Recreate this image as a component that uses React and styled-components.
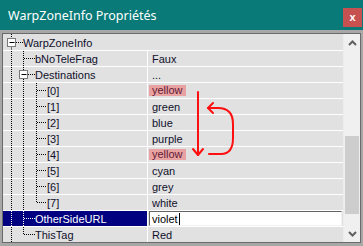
import React from "react";
import styled, {createGlobalStyle} from "styled-components";

const GlobalStyle = createGlobalStyle`
  html, body {
    margin: 0;
    padding: 0;
    background: #ffffff;
  }
`;

const Window = styled.div`
  position: relative;
  width: 363px;
  height: 246px;
  display: flex;
  flex-direction: column;
  overflow: hidden;
  font-family: "Liberation Sans", Arial, sans-serif;
`;

const TitleBar = styled.div`
  height: 30px;
  flex: none;
  display: flex;
  align-items: center;
  justify-content: space-between;
  padding-left: 8px;
  padding-right: 1px;
  background: #097a78;
  color: #ffffff;
  font-family: "Noto Sans", sans-serif;
  font-size: 12.5px;
`;

const CloseButton = styled.div`
  width: 19px;
  height: 19px;
  margin-top: 5px;
  display: flex;
  align-items: center;
  justify-content: center;
  background: #c75050;
  color: #ffffff;
  font-family: "Liberation Sans", sans-serif;
  font-weight: bold;
  font-size: 11px;
  padding-bottom: 2px;
  box-sizing: border-box;
`;

const Frame = styled.div`
  flex: 1;
  display: flex;
  border-top: 3px solid #a7a7a7;
  border-left: 2px solid #a7a7a7;
  border-right: 2px solid #a7a7a7;
  border-bottom: 3px solid #a7a7a7;
`;

const Panel = styled.div`
  flex: 1;
  display: flex;
  border: 1px solid #6a6a6a;
  background: #e1e1e1;
`;

const Rows = styled.div`
  flex: 1;
  display: flex;
  flex-direction: column;
`;

const Row = styled.div`
  height: ${p => (p.$first ? 16 : 15)}px;
  border-top: ${p => (p.$first ? "none" : "1px solid #ffffff")};
  display: grid;
  grid-template-columns: ${p => (p.$category ? "1fr" : "145px 1fr")};
  font-size: 11px;
  color: #10102c;
`;

const NameCell = styled.div`
  display: flex;
  align-items: center;
  background: ${p => (p.$selected ? "#000080" : "transparent")};
  color: ${p => (p.$selected ? "#ffffff" : "inherit")};
  border-right: ${p => (p.$category ? "none" : "1px solid #ffffff")};
  white-space: nowrap;
  overflow: hidden;
`;

const Label = styled.span`
  padding-top: 1px;
`;

const ValueCell = styled.div`
  display: flex;
  align-items: center;
  padding-left: 4px;
  padding-right: 1px;
`;

const Marked = styled.span`
  background: #e9a2a2;
  color: #5e1b35;
  padding: 0 3px;
  margin-left: -3px;
  line-height: 11px;
`;

const EditBox = styled.div`
  flex: 1;
  height: 15px;
  margin-left: -3px;
  box-sizing: border-box;
  display: flex;
  align-items: center;
  padding-left: 2px;
  background: #ffffff;
  border-top: 1px solid #646464;
  border-left: 1px solid #646464;
  border-right: 1px solid #f0f0f0;
  border-bottom: 1px solid #f0f0f0;
  color: #000000;
`;

const Caret = styled.span`
  display: inline-block;
  width: 1px;
  height: 12px;
  margin-left: 1px;
  background: #000000;
`;

const ScrollBar = styled.div`
  width: 16px;
  flex: none;
  display: flex;
  flex-direction: column;
  background: #f0f0f0;
  border-left: 1px solid #ececec;
`;

const ScrollButton = styled.div`
  height: 17px;
  flex: none;
  display: flex;
  align-items: center;
  justify-content: center;
`;

const Track = styled.div`
  flex: 1;
  display: flex;
  flex-direction: column;
`;

const Thumb = styled.div`
  margin-top: ${p => p.$offset}px;
  height: ${p => p.$size}px;
  margin-left: 1px;
  margin-right: 1px;
  background: #cdcdcd;
`;

const Annotation = styled.svg`
  position: absolute;
  left: 0;
  top: 0;
  pointer-events: none;
`;

// tree gutter: x positions of the guide lines inside the name cell
const L0 = 8.5;
const L1 = 20.5;
const L2 = 33.5;

const TreeLines = ({width, height, parts, light}) => {
    const col = light ? "#ffffff" : "#000000";
    const mid = Math.floor(height / 2) + 0.5;
    return (
        <svg width={width} height={height} style={{flex: "none", display: "block"}}>
            {parts.map((p, i) => {
                if (p.type === "v") {
                    const y1 = p.from === "mid" ? mid : 0;
                    const y2 = p.to === "mid" ? mid : height;
                    return <line key={i} x1={p.x} x2={p.x} y1={y1} y2={y2}
                                 stroke={col} strokeDasharray="1 1"/>;
                }
                if (p.type === "h") {
                    return <line key={i} x1={p.x1} x2={p.x2} y1={mid} y2={mid}
                                 stroke={col} strokeDasharray="1 1"/>;
                }
                // minus box
                return (
                    <g key={i}>
                        <rect x={p.x - 4} y={mid - 4} width="8" height="8"
                              fill="#ffffff" stroke="#7a7a7a"/>
                        <line x1={p.x - 2} x2={p.x + 3} y1={mid} y2={mid} stroke="#000000"/>
                    </g>
                );
            })}
        </svg>
    );
};

const items = [
    {
        name: "WarpZoneInfo", category: true, gutter: 20,
        parts: [
            {type: "v", x: L0, to: "mid"},
            {type: "v", x: L0, from: "mid"},
            {type: "h", x1: 13, x2: 20},
            {type: "box", x: L0},
        ],
    },
    {
        name: "bNoTeleFrag", value: "Faux", gutter: 32,
        parts: [
            {type: "v", x: L0},
            {type: "v", x: L1},
            {type: "h", x1: 21, x2: 32},
        ],
    },
    {
        name: "Destinations", value: "...", gutter: 32,
        parts: [
            {type: "v", x: L0},
            {type: "v", x: L1},
            {type: "h", x1: 25, x2: 32},
            {type: "box", x: L1},
        ],
    },
];

const colours = ["yellow", "green", "blue", "purple", "yellow", "cyan", "grey", "white"];
colours.forEach((c, i) => {
    items.push({
        name: `[${i}]`,
        value: c,
        marked: i === 0 || i === 4,
        gutter: 44,
        parts: [
            {type: "v", x: L0},
            {type: "v", x: L1},
            {type: "v", x: L2, to: i === 7 ? "mid" : undefined},
            {type: "h", x1: 34, x2: 44},
        ],
    });
});

items.push({
    name: "OtherSideURL", value: "violet", editing: true, selected: true, gutter: 32,
    parts: [
        {type: "v", x: L0},
        {type: "v", x: L1},
        {type: "h", x1: 21, x2: 32},
    ],
});

items.push({
    name: "ThisTag", value: "Red", gutter: 32,
    parts: [
        {type: "v", x: L0},
        {type: "v", x: L1, to: "mid"},
        {type: "h", x1: 21, x2: 32},
    ],
});

const Chevron = ({down}) => (
    <svg width="9" height="6">
        <polyline points={down ? "1,1 4.5,4.5 8,1" : "1,5 4.5,1.5 8,5"}
                  fill="none" stroke="#606060" strokeWidth="2"/>
    </svg>
);

export default function App() {
    return (
        <Window>
            <GlobalStyle/>
            <TitleBar>
                <span>WarpZoneInfo Propriétés</span>
                <CloseButton>x</CloseButton>
            </TitleBar>
            <Frame>
                <Panel>
                    <Rows>
                        {items.map((item, index) => {
                            const h = index === 0 ? 16 : 15;
                            return (
                                <Row key={index} $first={index === 0} $category={item.category}>
                                    <NameCell $selected={item.selected} $category={item.category}>
                                        <TreeLines width={item.gutter} height={h}
                                                   parts={item.parts} light={item.selected}/>
                                        <Label>{item.name}</Label>
                                    </NameCell>
                                    {!item.category &&
                                        <ValueCell>
                                            {item.editing ?
                                                <EditBox>{item.value}<Caret/></EditBox> :
                                                item.marked ?
                                                    <Marked>{item.value}</Marked> :
                                                    <Label>{item.value}</Label>
                                            }
                                        </ValueCell>
                                    }
                                </Row>
                            );
                        })}
                    </Rows>
                    <ScrollBar>
                        <ScrollButton><Chevron/></ScrollButton>
                        <Track>
                            <Thumb $offset={85} $size={78}/>
                        </Track>
                        <ScrollButton><Chevron down/></ScrollButton>
                    </ScrollBar>
                </Panel>
            </Frame>
            <Annotation width="363" height="246">
                <g fill="none" stroke="#ff1010" strokeWidth="2" strokeLinecap="round"
                   strokeLinejoin="round">
                    <path d="M198 92 L198 155"/>
                    <path d="M193 149 L198 155 L203 149"/>
                    <path d="M209 154 L221 154 Q233 154 233 138 L233 124 Q233 108 218 108 L208 108"/>
                    <path d="M213 103 L208 108 L213 113"/>
                </g>
            </Annotation>
        </Window>
    );
}
